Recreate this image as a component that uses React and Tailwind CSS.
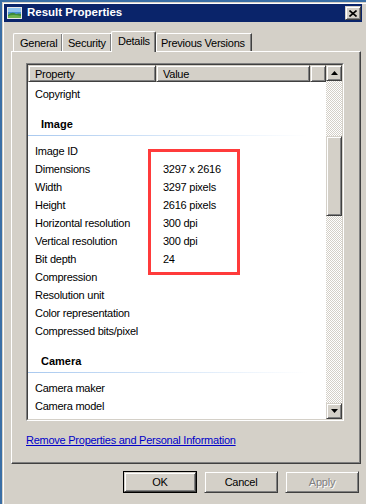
import React from "react";

const raised =
  "border border-t-[#d4d0c8] border-l-[#d4d0c8] border-r-[#404040] border-b-[#404040] shadow-[inset_1px_1px_#ffffff,inset_-1px_-1px_#808080] bg-[#d4d0c8]";

function Arrow({ up }) {
  return (
    <svg width="7" height="4" viewBox="0 0 7 4">
      {up ? (
        <polygon points="3.5,0 7,4 0,4" fill="#000" />
      ) : (
        <polygon points="0,0 7,0 3.5,4" fill="#000" />
      )}
    </svg>
  );
}

function Row({ label, value }) {
  return (
    <div className="flex h-[18px] leading-[18px] whitespace-nowrap">
      <div className="w-[128px] pl-[7px]">{label}</div>
      <div className="pl-[7px]">{value}</div>
    </div>
  );
}

function Group({ title }) {
  return (
    <div className="h-[39px] pt-[12px]">
      <div className="h-[18px] leading-[18px] pl-[13px] font-bold tracking-normal">{title}</div>
      <div className="mt-[2px] h-px w-[280px] bg-gradient-to-r from-[#a9c9ef] via-[#d6e6f8] to-white" />
    </div>
  );
}

export default function App() {
  return (
    <div className="relative w-[366px] h-[504px] overflow-hidden bg-[#3a6ea5] pl-[2px] pt-[2px] font-['Liberation_Sans',Arial,sans-serif] text-[11px] tracking-[-0.25px] text-black">
      <div className="w-[372px] h-[520px] bg-[#d4d0c8] border-t border-l border-[#d4d0c8]">
        <div className="h-full border-t border-l border-white">
          {/* Title bar */}
          <div className="w-[358px] h-[18px] bg-[#0a246a] flex items-center">
            <svg className="ml-[3px]" width="15" height="12" viewBox="0 0 15 12">
              <rect x="0" y="0" width="15" height="12" fill="#e8e8e8" />
              <rect x="1" y="1" width="13" height="10" fill="#4a8fd0" />
              <rect x="1" y="1" width="13" height="4" fill="#8fc3ee" />
              <path d="M1 8 Q5 4 9 7 Q12 6 14 7 L14 11 L1 11 Z" fill="#3c8a3a" />
              <path d="M1 9 Q6 7 14 9 L14 11 L1 11 Z" fill="#6fb44c" />
            </svg>
            <span className="ml-[5px] text-white font-bold text-[11.5px] tracking-normal leading-none">Result Properties</span>
            <div className={`ml-auto mr-[1px] w-[16px] h-[14px] flex items-center justify-center ${raised}`}>
              <svg width="8" height="7" viewBox="0 0 8 7">
                <path d="M0.5 0.5 L7.5 6.5 M7.5 0.5 L0.5 6.5" stroke="#000" strokeWidth="1.6" />
              </svg>
            </div>
          </div>

          {/* Tabs */}
          <div className="ml-[9px] mt-[9px] h-[20px] flex items-end">
            <div className="h-[18px] w-[49px] pl-[6px] leading-[18px] border-t border-l border-white rounded-tl-[2px] shadow-[inset_-1px_0_#808080]">General</div>
            <div className="h-[18px] w-[49px] pl-[5px] leading-[18px] border-t border-l border-white rounded-tl-[2px] shadow-[inset_-1px_0_#808080]">Security</div>
            <div className="relative z-10 h-[21px] -mb-px w-[45px] pl-[6px] leading-[19px] bg-[#d4d0c8] border-t border-l border-white border-r border-r-[#404040] rounded-t-[2px] shadow-[inset_-1px_0_#808080]">Details</div>
            <div className="h-[18px] w-[96px] pl-[4px] leading-[18px] border-t border-l border-white rounded-tl-[2px] border-r border-r-[#404040] shadow-[inset_-1px_0_#808080]">Previous Versions</div>
          </div>

          {/* Panel */}
          <div className="ml-[7px] w-[350px] h-[413px] border-t border-l border-white border-r border-b border-r-[#404040] border-b-[#404040] shadow-[inset_-1px_-1px_#808080]">
            {/* List view */}
            <div className="ml-[14px] mt-[11px] w-[318px] h-[358px] border border-t-[#808080] border-l-[#808080] border-r-white border-b-white">
              <div className="w-full h-full border border-t-[#404040] border-l-[#404040] border-r-[#d4d0c8] border-b-[#d4d0c8] bg-white flex">
                <div className="flex-1 flex flex-col overflow-hidden">
                  {/* Header */}
                  <div className="h-[17px] flex shrink-0 bg-[#d4d0c8] leading-[16px]">
                    <div className={`w-[128px] pl-[6px] ${raised}`}>Property</div>
                    <div className={`w-[154px] pl-[6px] ${raised}`}>Value</div>
                    <div className={`flex-1 ${raised}`} />
                  </div>
                  <div className="pt-[3px]">
                    <Row label="Copyright" />
                    <Group title="Image" />
                    <Row label="Image ID" />
                    <Row label="Dimensions" value="3297 x 2616" />
                    <Row label="Width" value="3297 pixels" />
                    <Row label="Height" value="2616 pixels" />
                    <Row label="Horizontal resolution" value="300 dpi" />
                    <Row label="Vertical resolution" value="300 dpi" />
                    <Row label="Bit depth" value="24" />
                    <Row label="Compression" />
                    <Row label="Resolution unit" />
                    <Row label="Color representation" />
                    <Row label="Compressed bits/pixel" />
                    <Group title="Camera" />
                    <Row label="Camera maker" />
                    <Row label="Camera model" />
                    <Row label="F-stop" />
                  </div>
                </div>
                {/* Scrollbar */}
                <div className="w-[16px] h-full flex flex-col bg-[image:repeating-conic-gradient(#d4d0c8_0_25%,#ffffff_0_50%)] bg-[length:2px_2px]">
                  <div className={`h-[16px] w-[16px] flex items-center justify-center ${raised}`}>
                    <Arrow up />
                  </div>
                  <div className="h-[55px]" />
                  <div className={`h-[80px] w-[16px] ${raised}`} />
                  <div className="flex-1" />
                  <div className={`h-[16px] w-[16px] flex items-center justify-center ${raised}`}>
                    <Arrow />
                  </div>
                </div>
              </div>
            </div>

            <div className="ml-[14px] mt-[12px] leading-[14px] text-[#0000c8] underline">
              Remove Properties and Personal Information
            </div>
          </div>

          {/* Buttons */}
          <div className="ml-[119px] mt-[7px] flex gap-[7px]">
            <div className="w-[74px] h-[22px] border border-black">
              <div className={`w-full h-full flex items-center justify-center ${raised}`}>OK</div>
            </div>
            <div className={`w-[74px] h-[22px] flex items-center justify-center ${raised}`}>Cancel</div>
            <div className={`w-[74px] h-[22px] flex items-center justify-center text-[#808080] [text-shadow:1px_1px_#ffffff] ${raised}`}>Apply</div>
          </div>
        </div>
      </div>

      {/* Red annotation box */}
      <div className="absolute left-[148px] top-[149px] w-[92px] h-[126px] border-[3px] border-[#ff3b3b]" />
    </div>
  );
}
